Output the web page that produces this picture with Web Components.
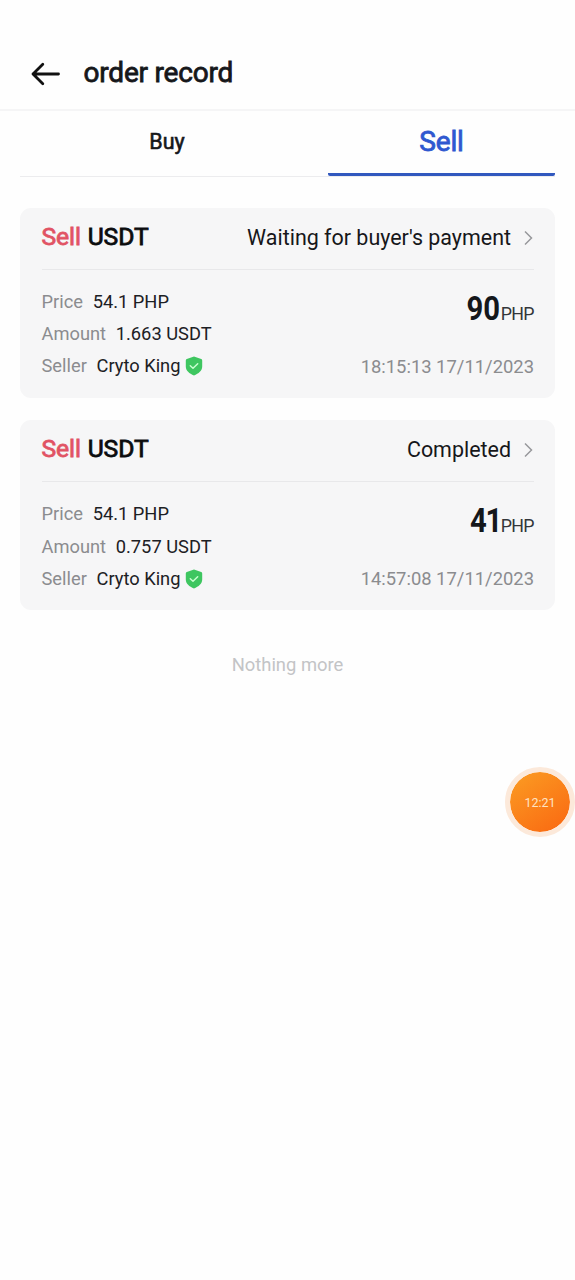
<!DOCTYPE html>
<html lang="en"><head><meta charset="utf-8"><title>order record</title>
<style>html,body{margin:0;background:#fefefe;font-family:Roboto,"Liberation Sans",sans-serif}</style></head>
<body><order-page></order-page>
<script>
function define(name, html) {
  const t = document.createElement('template');
  t.innerHTML = html;
  customElements.define(name, class extends HTMLElement {
    constructor() { super(); this.attachShadow({mode:'open'}).append(t.content.cloneNode(true)); }
  });
}
define('page-header', `<style>
:host{display:flex;box-sizing:border-box;height:111px;padding:37px 30px 0;align-items:center;border-bottom:2px solid #f5f5f6;color:#16171a}
svg{display:block;width:32px;height:26px;margin:1px 21.5px 0 0}
h1{margin:0;font-size:28px;font-weight:400;line-height:36px;-webkit-text-stroke:.8px currentColor;letter-spacing:-.2px;white-space:nowrap}
</style><svg viewBox="0 0 32 26" fill="none" stroke="#111" stroke-width="2.8" stroke-linecap="round" stroke-linejoin="round"><path d="M28.500 13H3M12.800 3.200 3 13l9.800 9.800"/></svg><h1><slot></slot></h1>`);
define('tab-bar', `<style>
:host{display:grid;grid-template-columns:308px 227px;height:65px;margin:0 20px;border-bottom:1px solid #ececee}
</style><slot></slot>`);
define('tab-item', `<style>
:host{display:flex;justify-content:center;box-sizing:border-box;height:65px;padding-top:15px;line-height:32px;font-size:21.5px;-webkit-text-stroke:.6px currentColor;color:#16171a;white-space:nowrap}
:host(:not([active])){padding-right:14px}
:host([active]){border-bottom:3px solid #3158be;border-radius:2px;font-size:28px;-webkit-text-stroke-width:.8px;letter-spacing:-.2px;color:#2f58d0}
</style><span><slot></slot></span>`);
define('verified-shield', `<style>:host{display:block;width:18px;height:20px;margin-top:1px}svg{display:block}</style>
<svg width="18" height="20" viewBox="0 0 18 20"><path fill="#3ec660" d="M9 .6 16.200 3q1 .4 1 1.400v6.200c0 4.300-3.500 7-8.200 9-4.700-2-8.200-4.700-8.200-9V4.400Q.8 3.400 1.800 3z"/><path d="m5.300 9.700 2.700 2.500 4.700-4.500" fill="none" stroke="#c9ffd0" stroke-width="1.500" stroke-linecap="round" stroke-linejoin="round"/></svg>`);
define('detail-row', `<style>
:host{display:flex;align-items:center;height:32.200px;font-size:18.300px;color:#1c2024;white-space:nowrap}
.l{color:#8b8c8f;margin-right:9.700px}.i{margin-left:4.500px}
</style><span class="l"><slot name="label"></slot></span><span><slot></slot></span><span class="i"><slot name="icon"></slot></span>`);
define('order-card', `<style>
:host{display:block;box-sizing:border-box;height:190px;margin:0 20px 22.300px;padding:0 21px 0 21.500px;background:#f6f6f7;border-radius:11px;white-space:nowrap}
header{display:flex;align-items:center;justify-content:space-between;box-sizing:border-box;height:62px;padding-bottom:4px;border-bottom:1px solid #e8e8ea}
h2{margin:0;font-size:24.700px;font-weight:400;letter-spacing:-.1px;word-spacing:.8px;-webkit-text-stroke:.8px currentColor;color:#0b0c0e}
.s{color:#e15364}
.st{display:flex;align-items:center;padding-top:1px;font-size:21.450px;color:#16171a}
svg{margin:1px 1px 0 13px}
.body{display:flex;justify-content:space-between;padding-top:15.500px}
.r{display:flex;flex-direction:column;align-items:flex-end}
.amt{display:flex;align-items:baseline;justify-content:flex-end;height:65px;line-height:44px;font-size:17.800px;letter-spacing:-.7px;color:#33363a}
.amt span{margin-right:.2px}
b{font-size:34px;letter-spacing:0;margin-right:.5px;color:#14171b;transform:scaleX(.86);transform-origin:right}
time{font-size:18.400px;line-height:32px;color:#8b8c8f}
</style><header><h2><span class="s">Sell</span> <span>USDT</span></h2><div class="st"><slot name="status"></slot><svg width="9" height="16" viewBox="0 0 9 16"><path d="m1 1.500 6.500 6.500L1 14.500" fill="none" stroke="#97989b" stroke-width="1.500"/></svg></div></header>
<div class="body"><div><slot></slot></div><div class="r"><div class="amt"><b><slot name="total"></slot></b><span>PHP</span></div><time><slot name="time"></slot></time></div></div>`);
define('end-note', `<style>:host{display:block;padding-top:21px;text-align:center;font-size:18.400px;line-height:22px;color:#c3c4c6}</style><span><slot></slot></span>`);
define('float-timer', `<style>
:host{position:absolute;left:505px;top:767px;width:70px;height:70px;box-sizing:border-box;border:5px solid #fce9da;border-radius:50%;background:linear-gradient(145deg,#fb9a22 12%,#fa6a12 88%) border-box;background-clip:padding-box;display:flex;align-items:center;justify-content:center;font-size:12.500px;color:#ffe3c2}
</style><slot></slot>`);
define('order-page', `<style>:host{display:block;position:relative;width:575px;height:1280px;overflow:hidden;background:#fefefe}.list{padding-top:31px}</style>
<page-header>order record</page-header>
<tab-bar><tab-item>Buy</tab-item><tab-item active>Sell</tab-item></tab-bar>
<div class="list">
<order-card><span slot="status">Waiting for buyer's payment</span><detail-row><span slot="label">Price</span>54.1 PHP</detail-row><detail-row><span slot="label">Amount</span>1.663 USDT</detail-row><detail-row><span slot="label">Seller</span>Cryto King<verified-shield slot="icon"></verified-shield></detail-row><span slot="total">90</span><span slot="time">18:15:13 17/11/2023</span></order-card>
<order-card><span slot="status">Completed</span><detail-row><span slot="label">Price</span>54.1 PHP</detail-row><detail-row><span slot="label">Amount</span>0.757 USDT</detail-row><detail-row><span slot="label">Seller</span>Cryto King<verified-shield slot="icon"></verified-shield></detail-row><span slot="total" style="letter-spacing:-1.500px;margin-right:-1px">41</span><span slot="time">14:57:08 17/11/2023</span></order-card></div>
<end-note>Nothing more</end-note><float-timer>12:21</float-timer>`);
</script></body></html>
